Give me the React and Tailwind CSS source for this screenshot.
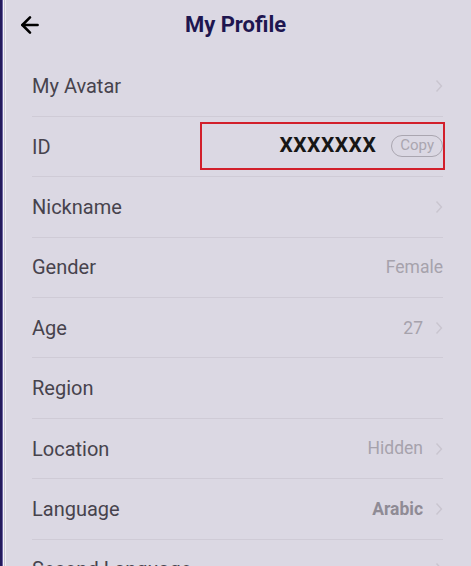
import { ArrowLeft } from 'lucide-react';

const rows = [
  { label: 'My Avatar', chevron: true },
  { label: 'ID', id: 'XXXXXXX' },
  { label: 'Nickname', chevron: true },
  { label: 'Gender', value: 'Female' },
  { label: 'Age', value: '27', chevron: true },
  { label: 'Region' },
  { label: 'Location', value: 'Hidden', chevron: true },
  { label: 'Language', value: 'Arabic', bold: true, chevron: true },
  { label: 'Second Language', chevron: true },
];

function Chevron() {
  return (
    <svg width="8" height="14" viewBox="0 0 8 14" className="ml-[12px] shrink-0">
      <polyline points="1.5,1.5 6.5,7 1.5,12.5" fill="none" stroke="#c9c5cf" strokeWidth="1.4" />
    </svg>
  );
}

function Row({ row }) {
  return (
    <div className="h-[60.4px] flex items-center border-b border-[#cfcbd6] relative">
      <span className="text-[20px] text-[#47434d]">{row.label}</span>
      <div className="ml-auto flex items-center">
        {row.value && (
          <span className={row.bold ? 'text-[17.5px] font-bold text-[#8f8b95]' : 'text-[17.5px] text-[#a6a2ac]'}>
            {row.value}
          </span>
        )}
        {row.chevron && <Chevron />}
      </div>
      {row.id && (
        <div className="absolute right-[-2px] top-[5px] w-[245px] h-[48px] border-2 border-[#d21f2b] flex items-center justify-end pr-[0px]">
          <span className="text-[21px] font-bold text-[#161616] tracking-[0.5px]">{row.id}</span>
          <span className="ml-[15px] h-[22px] px-[8px] flex items-center rounded-full border-[1.5px] border-[#aaa6b0] text-[15px] text-[#aaa6b0] leading-none">
            Copy
          </span>
        </div>
      )}
    </div>
  );
}

export default function App() {
  return (
    <div className="w-[471px] h-[566px] overflow-hidden bg-[#dbd8e3] flex font-['Roboto',sans-serif]">
      <div className="w-[2px] bg-[#231a5c] shrink-0" />
      <div className="w-[1px] bg-[#6a62a0] shrink-0" />
      <div className="w-[1px] bg-[#f2f1f6] shrink-0" />
      <div className="w-[1px] bg-[#c7c4cf] shrink-0" />
      <div className="w-[1px] bg-[#eeedf3] shrink-0" />
      <div className="flex-1 flex flex-col">
        <div className="h-[56.5px] flex items-start relative shrink-0">
          <ArrowLeft className="absolute left-[11px] top-[12px] w-[26px] h-[26px] text-black" strokeWidth={2.4} />
          <div className="w-full text-center text-[22px] leading-[28px] mt-[11px] font-bold text-[#1e1650] pr-[6px]">My Profile</div>
        </div>
        <div className="pl-[26px] pr-[28px]">
          {rows.map((r) => (
            <Row key={r.label} row={r} />
          ))}
        </div>
      </div>
    </div>
  );
}
